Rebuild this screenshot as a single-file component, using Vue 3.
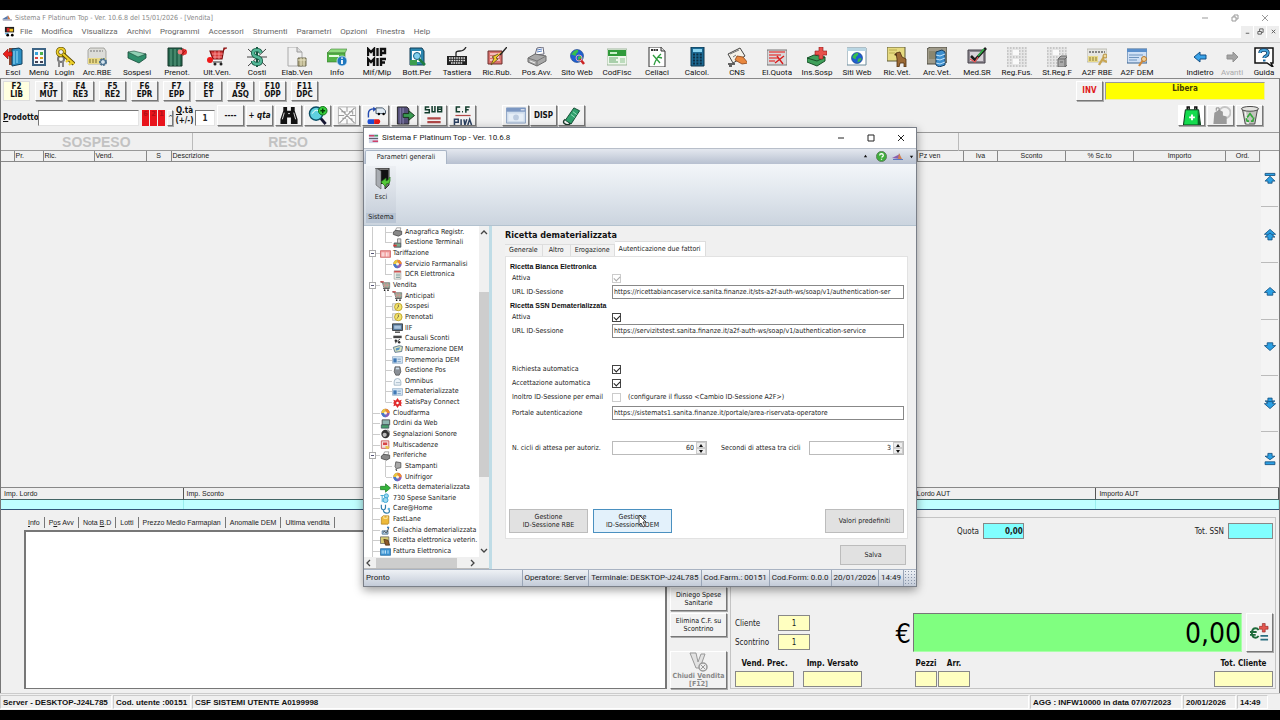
<script setup>
import { ref } from 'vue'

const menus = ['File', 'Modifica', 'Visualizza', 'Archivi', 'Programmi', 'Accessori', 'Strumenti', 'Parametri', 'Opzioni', 'Finestra', 'Help']

const globe = (x, y, r) =>
  `<circle cx="${x}" cy="${y}" r="${r}" fill="#1f5fd0" stroke="#123c80" stroke-width=".6"/><path d="M${x - r + 1} ${y - 1}q2-${r - 1} ${r} -${r - 1.5}q1 2-1 3t-1 3q-3 0-${r - 1}-3zM${x + 1} ${y + 1}q3-2 ${r - 2} 0q-1 3-4 ${r - 2}z" fill="#38c04a"/>`

const tools = [
  { t: 'Esci', s: 'w26', i: '<path d="M6 1h11v17H6z" fill="#8a4a34"/><path d="M9 2l7-1 3 2v14l-10 2z" fill="#2c8fc4" stroke="#12415f"/><path d="M11 4v13M14 4v12" stroke="#79c9ec" stroke-width="1.4"/><path d="M9 5H5V2L0 7l5 5V9h4z" fill="#e8201c" stroke="#8c0c0c" stroke-width=".6"/>' },
  { t: 'Menù', s: 'w26', i: '<path d="M3 1h14v18H3z" fill="#3d6485"/><path d="M5 3h10v14H5z" fill="#f4f8fb"/><path d="M6 5h3v3H6z" fill="#36a0da"/><path d="M11 5h3v3h-3z" fill="#4cb04c"/><path d="M6 10h3v2H6z" fill="#e04040"/><path d="M11 10h3v2h-3z" fill="#d8a020"/><path d="M6 14h3v2H6zM11 14h3v2h-3z" fill="#445"/>' },
  { t: 'Login', s: 'w25', i: '<circle cx="6" cy="12" r="3" fill="none" stroke="#777" stroke-width="2"/><path d="M4 14v6M8 14v6" stroke="#888" stroke-width="2"/><circle cx="6" cy="5" r="3.6" fill="none" stroke="#5c4a00" stroke-width="3.2"/><circle cx="6" cy="5" r="3.6" fill="none" stroke="#efd12b" stroke-width="2"/><path d="M8 7l11 10" stroke="#5c4a00" stroke-width="4"/><path d="M8 7l11 10M14 12l-3 3M17 15l-3 3" stroke="#efd12b" stroke-width="2.2"/>' },
  { t: 'Arc.RBE', i: '<path d="M1 3l2-2h14l2 3v13H1z" fill="#dcdcd8" stroke="#8a8a84" stroke-width=".7"/><path d="M3 4h13" stroke="#777" stroke-dasharray="2 1"/><path d="M1 11h18v6H1z" fill="#e8d98a"/><path d="M3 12v4M6 12v4M9 12v4" stroke="#9b8c45" stroke-width="1.4"/><circle cx="16" cy="15" r="3" fill="#d5e4ee" stroke="#49708f" stroke-width="2" stroke-dasharray="2 .7"/><circle cx="16" cy="15" r="2.5" fill="none" stroke="#49708f"/>' },
  { t: 'Sospesi', i: '<path d="M1 5l8 3 10-1v4l-7 5-11-5z" fill="#2f8f6c" stroke="#174a38" stroke-width=".8"/><path d="M1 5l6-1 12 3-8 3z" fill="#8fd0b4" stroke="#174a38" stroke-width=".6"/>' },
  { t: 'Prenot.', i: '<path d="M1 1h14v18H1z" fill="#27684f" stroke="#123528"/><path d="M4 2v17M8 2v17M12 2v17" stroke="#63a487"/><circle cx="17" cy="5" r="3" fill="#e83030"/><circle cx="13" cy="5" r="2.4" fill="#f47f7f"/><path d="M16 1v8M19 3l-5 5" stroke="#901010" stroke-width=".7"/>' },
  { t: 'Ult.Ven.', i: '<path d="M20 1h-3l-2 11H6L3 4h13" fill="#d83c3c" stroke="#7a1010" stroke-width="1.2"/><path d="M5 7h11M6 10h9M8 4v8M12 4v8" stroke="#ffaaaa" stroke-width=".7"/><circle cx="3" cy="13" r="3" fill="#f01818"/><path d="M6 15h9" stroke="#333"/><circle cx="8" cy="17" r="1.5" fill="#222"/><circle cx="14" cy="17" r="1.5" fill="#222"/>' },
  { t: 'Costi', i: '<path d="M1 2l18 17M19 2L1 19M0 10h20" stroke="#444"/><path d="M10 0v20" stroke="#14563f" stroke-width="2"/><path d="M14 6q-1-3-4-3-4 0-4 3t4 4q4 1 4 4t-4 3q-4 0-4-3" fill="none" stroke="#14563f" stroke-width="4"/><path d="M14 6q-1-3-4-3-4 0-4 3t4 4q4 1 4 4t-4 3q-4 0-4-3" fill="none" stroke="#53b797" stroke-width="2.4"/>' },
  { t: 'Elab.Ven', i: '<path d="M1 0h9l5 5v14H1z" fill="#f0f0f0" stroke="#aaa"/><path d="M10 0v5h5" fill="#ddd" stroke="#999"/><path d="M11 11h8v8h-8z" fill="#b5ad86" stroke="#6e6a50"/><path d="M11 13h8M14 11v8M17 11v8" stroke="#e9e4c4"/>' },
  { t: 'Info', i: '<path d="M0 6l4-4h16l-2 4z" fill="#8fdc7e" stroke="#44843a" stroke-width=".6"/><path d="M0 6h18v9H0z" fill="#55b447" stroke="#34752c" stroke-width=".6"/><path d="M2 9h10" stroke="#e6ffe0" stroke-width="2"/><circle cx="15" cy="14" r="5" fill="#1f77bd" stroke="#cfe6f7" stroke-width=".8"/><path d="M15 13v4M15 10.400v1.400" stroke="#fff" stroke-width="1.8"/>' },
  { t: 'Mif/Mip', i: '<path d="M1 9V2l3 3 3-3v7M10.500 1v8M14 9V2h4v4h-4M1 19v-7l3 3 3-3v7M10.500 11v8M14 19v-7h5M14 15.500h4" fill="none" stroke="#111" stroke-width="2.400"/>' },
  { t: 'Bott.Per', i: '<path d="M3 1h12l2 3v14H3z" fill="#2b87b0" stroke="#123d55"/><path d="M5 4h9v11H5z" fill="#fff"/><circle cx="10" cy="9" r="3.500" fill="#82d0ee" stroke="#176085"/><path d="M12 12l6 6" stroke="#1e7c40" stroke-width="2.500"/><path d="M3 13h7v5H3z" fill="#3b9d4e"/>' },
  { t: 'Tastiera', i: '<path d="M9 9V6q0-2 4-2t6-4" fill="none" stroke="#222" stroke-width="1.300"/><path d="M0 9h20v9H0z" fill="#222"/><path d="M2 11h16M2 13.500h16M4 16h12" stroke="#e4e4e4" stroke-width="1.300" stroke-dasharray="1.600 .8"/>' },
  { t: 'Ric.Rub.', i: '<path d="M1 4h14v13H1z" fill="#d9736f" stroke="#6d2f2d"/><path d="M3 7h10M3 10h9M3 13h10" stroke="#fbd6d4" stroke-width="1.400"/><path d="M20 0L13 8" stroke="#222" stroke-width="1.400"/><path d="M15 5L9 11l2 1-7 6 3-7-2-1 6-3" fill="#f2cd2a" stroke="#57471a" stroke-width=".8"/>' },
  { t: 'Pos.Avv.', i: '<path d="M8 8l2-7 6-1 1 7z" fill="#fff" stroke="#667"/><path d="M10 3l5-1M10 5l5-1" stroke="#5c84c4"/><path d="M1 11l7-4 11 2v5l-9 5-9-4z" fill="#a8a8a8" stroke="#6b6b6b"/><path d="M1 11l9 3 9-5M10 14v5" fill="none" stroke="#777"/><path d="M3 14l5 2" stroke="#eee"/>' },
  { t: 'Sito Web', i: globe(10, 9, 6.5) + '<path d="M13 12l4 5" stroke="#c22" stroke-width="2.500"/><circle cx="12" cy="11" r="3" fill="none" stroke="#d8a0c0"/>' },
  { t: 'CodFisc', i: '<path d="M0 2h20v16H0z" fill="#eef6ec" stroke="#7fa07b" stroke-width=".7"/><path d="M1 3h18v6H1z" fill="#2f9a3a"/><path d="M3 5h7v2H3z" fill="#c9efca"/><path d="M2 11h9M2 13h7M2 15h9" stroke="#64a96a"/><path d="M13 11h5v5h-5z" fill="#bcdcbc"/>' },
  { t: 'Celiaci', i: '<path d="M2 0h12l4 4v16H2z" fill="#fff" stroke="#333"/><path d="M14 0v4h4" fill="#ddd" stroke="#333"/><path d="M4 3h7" stroke="#333" stroke-width="2" stroke-dasharray="2 .6"/><path d="M6 8l7 8M14 7q-5 4-7 11M11 10l4 1" fill="none" stroke="#2c9b3c" stroke-width="1.300"/>' },
  { t: 'Calcol.', i: '<path d="M4 0h13v19H4z" fill="#1c6a94" stroke="#0c354d"/><path d="M6 2h9v3H6z" fill="#8bd3ef"/><path d="M6 7.500h9M6 10.500h9M6 13.500h9M6 16.500h9" stroke="#0d2d42" stroke-width="2" stroke-dasharray="2 1.400"/>' },
  { t: 'CNS', i: '<path d="M1 7L13 1l5 8L6 16z" fill="#f4f1e8" stroke="#444"/><path d="M3 7l9-4M6 10l3-2" stroke="#777"/><path d="M10 9l6 1 5 6-6 1-7-4z" fill="#e9883f" stroke="#8a4316" stroke-width=".8"/><path d="M1 17h7M2 19h3" stroke="#333" stroke-width="1.500"/>' },
  { t: 'El.Quota', i: '<path d="M0 3h20v15H0z" fill="#d8d8da" stroke="#777"/><path d="M2 5h16M2 8h12M2 11h9M2 14h6" stroke="#e2504f" stroke-width="1.300"/><path d="M10 9l6 8M17 9l-9 7" stroke="#d91c1c" stroke-width="1.400"/>' },
  { t: 'Ins.Sosp', i: '<path d="M0 11l7-3 11 2v4l-8 5-10-4z" fill="#3fa05a" stroke="#195029"/><path d="M0 11l10 3 8-4" fill="none" stroke="#195029"/><path d="M12 0h4v4h4v4h-4v4h-4V8H8V4h4z" fill="#e8504c" stroke="#8c1a18" stroke-width=".6"/>' },
  { t: 'Siti Web', i: '<path d="M0 1h19v17H0z" fill="#fff" stroke="#6c8c9c"/><path d="M0 1h19v3H0z" fill="#b9d6e3"/>' + globe(10, 11, 5.5) },
  { t: 'Ric.Vet.', i: '<path d="M0 0h18v14H0z" fill="#e6da80" stroke="#5e5a38"/><path d="M2 3h8M2 6h6" stroke="#b8ac50"/><path d="M9 6l4-1 2 5 4 2v8h-2v-4h-4l-1 4h-2v-8z" fill="#9c6a35" stroke="#4c2d10" stroke-width=".8"/><path d="M9 6l-2 2 3 1" fill="#4c2d10"/>' },
  { t: 'Arc.Vet.', i: '<path d="M0 2l3-2h17v15l-4 2H0z" fill="#a09b8a" stroke="#4b493f"/><path d="M2 4h8v8H2z" fill="#8a866f"/><path d="M9 5l6-2 3 2v13l-6 2-3-2z" fill="#3d8fce" stroke="#173f62"/><path d="M9 8l4 1 5-2M9 12l4 1 5-2M9 16l4 1 5-2" fill="none" stroke="#c5e5fb"/>' },
  { t: 'Med.SR', i: '<path d="M1 3h17v13H1z" fill="#8d8890" stroke="#454148"/><path d="M3 5h13v9H3z" fill="#d8d2d8"/><path d="M4 9l4 4L19 1" fill="none" stroke="#1c1c1c" stroke-width="2.600"/><path d="M11 9l6-7" stroke="#31b247" stroke-width="1.600"/><path d="M3 12l5 3 3-5" fill="none" stroke="#e55" stroke-width="1.200"/>' },
  { t: 'Reg.Fus.', i: '<path d="M0 0h20v20H0z" fill="#e6e6e6"/><path d="M0 1h20M0 4h20M0 7h20M0 10h20M0 13h20M0 16h20M0 19h20" stroke="#bdbdbd" stroke-width="1.500" stroke-dasharray="1.500 1.500"/><path d="M6 3h6v5H6zM6 12h6v5H6z" fill="#fafafa"/>' },
  { t: 'St.Reg.F', i: '<path d="M0 0h20v20H0z" fill="#e6e6e6"/><path d="M0 1h20M0 4h20M0 7h20M0 10h20M0 13h20M0 16h20M0 19h20" stroke="#bdbdbd" stroke-width="1.500" stroke-dasharray="1.500 1.500"/><path d="M6 3h6v5H6z" fill="#fafafa"/><path d="M11 12l3-3h7v8l-3 3h-7z" fill="#aaa" stroke="#666"/><path d="M11 12h7v8M18 12l3-3M13 15h3" fill="none" stroke="#666"/>' },
  { t: 'A2F RBE', i: '<path d="M0 2h20v13H0z" fill="#e6e6e2" stroke="#a9a99e" stroke-width=".7"/><path d="M2 5h16" stroke="#666" stroke-width="1.400" stroke-dasharray="2 1"/><path d="M1 9h10v6H1z" fill="#e8d98a"/><path d="M3 10v4M6 10v4M9 10v4" stroke="#9b8c45" stroke-width="1.200"/><path d="M18 8l-6 10M16 13l4 2" stroke="#c9a653" stroke-width="2.400"/><circle cx="18" cy="9" r="2" fill="#ecd9a2" stroke="#b58f3c"/>' },
  { t: 'A2F DEM', i: '<path d="M0 2h20v14H0z" fill="#cfe0f6" stroke="#39628f"/><path d="M0 2h20v3H0z" fill="#5b8fcb"/><path d="M2 8h14M2 10.500h10M2 13h8" stroke="#6f94be"/><path d="M18 10l-6 9" stroke="#d28a3b" stroke-width="2.200"/><circle cx="17" cy="12" r="2.500" fill="#f3cf94" stroke="#b5762c"/>' }
]
const navTools = [
  { t: 'Indietro', i: '<path d="M16 8h-6V5L4 10l6 5v-3h6z" fill="#3aa3e8" stroke="#124f85"/>' },
  { t: 'Avanti', off: true, i: '<path d="M5 8h6V5l5 5-5 5v-3H5z" fill="#a4a4a4" stroke="#909090"/>' },
  { t: 'Guida', i: '<path d="M1 1h18v15h-2l2 4-6-4H1z" fill="#fff" stroke="#111" stroke-width="1.500"/><path d="M6 6q0-3 4-3t4 3q0 2-2 3t-2 2" fill="none" stroke="#143d66" stroke-width="3.400"/><path d="M6 6q0-3 4-3t4 3q0 2-2 3t-2 2" fill="none" stroke="#47a6dc" stroke-width="1.800"/><path d="M9 12.500h2.500v2H9z" fill="#1c6aa0"/>' }
]

const keys = [['F2', 'LIB'], ['F3', 'MUT'], ['F4', 'RE3'], ['F5', 'RE2'], ['F6', 'EPR'], ['F7', 'EPP'], ['F8', 'ET'], ['F9', 'ASQ'], ['F10', 'OPP'], ['F11', 'DPC']]

const binoculars = '<path d="M4 1h4v4h4V1h4v4l3 9v5h-7v-7H8v7H1v-5l3-9z" fill="#111"/><path d="M5 7l-2 7M15 7l2 7M9 8h2" stroke="#ddd"/>'
const lens = '<path d="M12 12l6 7" stroke="#151530" stroke-width="3"/><circle cx="8" cy="8" r="7" fill="#5fd0e0" stroke="#0b4e66" stroke-width="1.500"/><path d="M4 8q3-5 6-3" stroke="#fff" fill="none"/><circle cx="15" cy="5" r="4.500" fill="#37d13c" stroke="#0c6c14"/><path d="M15 2.500v5M12.500 5h5" stroke="#043c08" stroke-width="1.500"/>'
const circuit = '<path d="M1 1h18v18H1z" fill="#fafafa" stroke="#b5b5b5"/><path d="M2 2l16 16M18 2L2 18M10 1v5M1 10h6M13 10h6M10 14v5M4 6h4v3M12 6h4v3M5 13h4M12 13l4 1" fill="none" stroke="#999" stroke-width="1.100"/>'
const delivery = '<path d="M2 12V8q0-5 6-5" fill="none" stroke="#234bb0" stroke-width="1.500"/><path d="M7 1l4 2-4 3z" fill="#234bb0"/><path d="M10 2h7l3 3v3H10z" fill="#dfeaf4" stroke="#456"/><circle cx="13" cy="8.500" r="1.300"/><circle cx="18" cy="8.500" r="1.300"/><path d="M2 14h6v5H2q-2-2 0-5z" fill="#1e50d8"/><path d="M8 14h5q3 2 0 5H8z" fill="#e51c1c"/>'
const doorOut = '<path d="M2 1h10l2 2v16H2z" fill="#544f78" stroke="#222"/><path d="M5 2v17M8 2v17" stroke="#8e89b5"/><path d="M8 8h6V5l6 5-6 5v-3H8z" fill="#3a9b52" stroke="#16301b"/>'
const sub = '<path d="M5 1H1v3h4v3H0M8 0v6h3V0M14 1v5h4V1zM14 3.500h4" fill="none" stroke="#123c2c" stroke-width="1.600"/><path d="M3 13h14M3 17h14" stroke="#b04848" stroke-width="2.400"/>'
const cf = '<path d="M7 1H3v5h4M9 6h1M17 1h-4v6M13 4h3" fill="none" stroke="#123c2c" stroke-width="1.600"/><path d="M2 10h16" stroke="#b04848" stroke-width="1.300"/><path d="M1 20v-6h4v3H1M8 14v6M11 14l1 6 2-6M15 20l2-6 2 6" fill="none" stroke="#2b4060" stroke-width="1.600"/>'
const windowPic = '<path d="M0 2h20v16H0z" fill="#cfdcec" stroke="#8fa5c4"/><path d="M0 2h20v4H0z" fill="#7c97c2"/><path d="M15 4h4" stroke="#fff"/><path d="M2 8h16v8H2z" fill="#e6eef7"/><circle cx="10" cy="12" r="3" fill="#bccbe0"/>'
const tube = '<path d="M12 2l6 3-9 14-6-4z" fill="#2fa06c" stroke="#0f4a30"/><path d="M11 6l4 3M9 9l4 3" stroke="#9be0bf"/><path d="M3 14q-4 3 0 5t5-1" fill="none" stroke="#1d3a2c" stroke-width="1.500"/>'
const bag = '<path d="M5 4V1h2v3M13 4V1h2v3" fill="none" stroke="#111" stroke-width="1.600"/><path d="M3 4h14l2 16H1z" fill="#14db4e" stroke="#0a3016"/><path d="M16 4l3 16h-3z" fill="#0b5d26"/><path d="M10 9v6M7 12h6" stroke="#fff" stroke-width="2"/>'
const greyBag = '<circle cx="14" cy="7" r="6" fill="none" stroke="#c4c4c4" stroke-width="2"/><path d="M3 7l5-3 4 2v4l4 1v8H2z" fill="#9a9a9a"/><path d="M5 5V2h3v3" fill="none" stroke="#888"/>'
const bin = '<path d="M2 3l3 16h10l3-16z" fill="#c3c3c0" stroke="#444"/><path d="M5 6l2 12h2" fill="none" stroke="#f3f3f3" stroke-width="1.500"/><ellipse cx="10" cy="3" rx="9" ry="2.500" fill="#e3e3e0" stroke="#444"/><path d="M7 12l3-4 3 4M14 12l-1 4h-2M9 16H7l-1-3" fill="none" stroke="#34a83a" stroke-width="1.800"/>'
const euroSum = '<path d="M9 7q-1-2-3-2-4 0-4 5t4 5q2 0 3-2M0 9h7M0 12h6" fill="none" stroke="#1f6a3b" stroke-width="2"/><path d="M13 0h3v3h3v3h-3v3h-3V6h-3V3h3z" fill="#e2574f" stroke="#8c1a18" stroke-width=".6"/><path d="M11 13h8M11 17h8" stroke="#2b6f80" stroke-width="2"/>'
const closeSale = '<path d="M1 1h6l2 9 3-8h4l-5 14H7z" fill="#e2e2e2" stroke="#999"/><circle cx="14" cy="15" r="4" fill="#eee" stroke="#999" stroke-width="1.500"/><path d="M12 13l4 4M16 13l-4 4" stroke="#999"/>'

const actions = [
  { label: 'Cerca', i: binoculars }, { label: 'Zoom', i: lens }, { label: 'Schema', i: circuit }, { label: 'Consegna', i: delivery },
  { label: 'Uscita', i: doorOut }, { label: 'Subtotale', i: sub }, { label: 'C.F. / P.IVA', i: cf }
]

const scrolls = [
  { label: 'Inizio', d: ['M3 2h14v3H3z', 'M10 6l7 7h-4v3H7v-3H3z'] },
  { label: 'Pagina su', d: ['M10 2l8 7h-4v3H6V9H2z', 'M10 7l7 6h-4v4H7v-4H3z'] },
  { label: 'Su', d: ['M10 5l8 7h-4v4H6v-4H2z'] },
  { label: 'Giù', d: ['M10 15L2 8h4V4h8v4h4z'] },
  { label: 'Pagina giù', d: ['M10 13L3 7h4V3h6v4h4z', 'M10 18l-8-7h4V8h8v3h4z'] },
  { label: 'Fine', d: ['M10 11L3 6h4V2h6v4h4z', 'M3 14h14v4H3z'] }
]

const ball = '<circle cx="6" cy="6" r="5" fill="#8d5fb5"/><path d="M6 6V1a5 5 0 0 1 5 5z" fill="#ef8a2d"/><path d="M6 6H1a5 5 0 0 1 5-5z" fill="#e9c83a"/><path d="M6 6v5a5 5 0 0 1-5-5z" fill="#4879c9"/><circle cx="6" cy="6" r="1.800" fill="#fff4d8"/>'
const printer = '<path d="M3 5l2-4h5l-1 4z" fill="#fff" stroke="#666" stroke-width=".7"/><path d="M1 6l3-2 7 1v4l-4 2-6-2z" fill="#888" stroke="#333" stroke-width=".8"/>'
const cart = '<path d="M0 1h2l2 7h7V2H3z" fill="#8fb69b" stroke="#666" stroke-width=".8"/><path d="M5 2v6M8 2v6M3 5h8" stroke="#d89090"/><path d="M0 1h4" stroke="#c44" stroke-width="1.500"/><path d="M3 9h8" stroke="#444"/><circle cx="5" cy="11" r="1" fill="#222"/><circle cx="9" cy="11" r="1" fill="#222"/>'
const clock = '<path d="M0 2h5v8H0z" fill="#e8e8e8" stroke="#999" stroke-width=".6"/><circle cx="7" cy="6" r="4.500" fill="#f3e46a" stroke="#b79b23"/><path d="M7 3v3l-2 2" fill="none" stroke="#654"/>'
const slip = '<path d="M0 2h12v8H0z" fill="#d6e6f5" stroke="#7b9ab8" stroke-width=".7"/><path d="M1 4h4v5H1z" fill="#3f78b5"/><path d="M6 5h4M6 8h4" stroke="#6b91b6"/>'
const tree = [
  { t: 'Anagrafica Registr.', l: 1, i: printer },
  { t: 'Gestione Terminali', l: 1, end: true, i: '<path d="M2 6h8v5H2z" fill="#7ba88a" stroke="#445"/><path d="M6 1h4v5H6z" fill="#ddd" stroke="#777"/><path d="M1 8h4v2H1z" fill="#d33"/>' },
  { t: 'Tariffazione', l: 0, open: true, i: '<path d="M0 2h12v8H0z" fill="#f29a9a" stroke="#c35050" stroke-width=".8"/><path d="M2 4v5M4 4v5M7 4v5M9 4v5" stroke="#fff"/>' },
  { t: 'Servizio Farmanalisi', l: 1, i: ball },
  { t: 'DCR Elettronica', l: 1, end: true, i: '<path d="M2 1h8v10H2z" fill="#f3f3ec" stroke="#888" stroke-width=".7"/><path d="M2 2h8" stroke="#c55" stroke-width="2"/><path d="M4 5h5M4 7h5M4 9h5" stroke="#799"/>' },
  { t: 'Vendita', l: 0, open: true, i: cart },
  { t: 'Anticipati', l: 1, i: cart },
  { t: 'Sospesi', l: 1, i: clock },
  { t: 'Prenotati', l: 1, i: clock },
  { t: 'IIF', l: 1, i: '<path d="M0 1h12v8H0z" fill="#56789c" stroke="#333"/><path d="M2 3h8v4H2z" fill="#a9c3dd"/><path d="M3 11h6" stroke="#333" stroke-width="1.500"/>' },
  { t: 'Causali Sconti', l: 1, i: '<path d="M1 2h10v3H1z" fill="#444"/><circle cx="4" cy="8" r="1.500" fill="#333"/><circle cx="8" cy="10" r="1.500" fill="#333"/><path d="M9 6l-6 5" stroke="#333"/>' },
  { t: 'Numerazione DEM', l: 1, i: '<path d="M1 4l7-2 4 1-1 6-8 1z" fill="#dfe6c0" stroke="#4c6a86"/><path d="M4 5l5-1-1 3-4 1z" fill="#5a96c4"/>' },
  { t: 'Promemoria DEM', l: 1, i: slip },
  { t: 'Gestione Pos', l: 1, i: '<path d="M3 1h6l1 6-2 4H4L2 7z" fill="#8a8f96" stroke="#444" stroke-width=".8"/><path d="M4 2h4v2H4z" fill="#cfe0ee"/>' },
  { t: 'Omnibus', l: 1, i: '<path d="M2 7a4 4 0 0 1 8 0v4H2z" fill="#eef4f8" stroke="#9ab0c0"/><path d="M4 8h5" stroke="#9ab0c0"/>' },
  { t: 'Dematerializzate', l: 1, i: slip },
  { t: 'SatisPay Connect', l: 1, end: true, i: '<path d="M6 0l2 3 3-1-1 3 2 1-2 1 1 3-3-1-2 3-2-3-3 1 1-3-2-1 2-1-1-3 3 1z" fill="#e02b2b"/><circle cx="6" cy="6" r="1.500" fill="#fff"/>' },
  { t: 'Cloudfarma', l: 0, i: ball },
  { t: 'Ordini da Web', l: 0, i: '<path d="M2 1h9v6H2z" fill="#8fb6b0" stroke="#444"/><path d="M1 7h9v4H1z" fill="#48a06c" stroke="#345" stroke-width=".8"/>' },
  { t: 'Segnalazioni Sonore', l: 0, i: '<circle cx="6" cy="6" r="5" fill="#333"/><circle cx="5" cy="7" r="2.500" fill="#bbb"/><path d="M8 1l3 3" stroke="#999" stroke-width="2"/>' },
  { t: 'Multiscadenze', l: 0, i: '<path d="M1 1h9v9H1z" fill="#f5dede" stroke="#c24a4a"/><path d="M3 3h5v3H3z" fill="#d84545"/><path d="M6 7l5 1-2 3-3-1z" fill="#e9c54b"/>' },
  { t: 'Periferiche', l: 0, open: true, i: printer },
  { t: 'Stampanti', l: 1, i: '<path d="M4 1l6 1v6l-5 1-2-2z" fill="#aaa" stroke="#555"/><path d="M4 9l1 3" stroke="#555" stroke-width="1.500"/>' },
  { t: 'Unifrigor', l: 1, end: true, i: ball },
  { t: 'Ricetta dematerializzata', l: 0, i: '<path d="M0 4h6V1l6 5-6 5V8H0z" fill="#35b53b" stroke="#1a741f" stroke-width=".8"/>' },
  { t: '730 Spese Sanitarie', l: 0, i: '<circle cx="7" cy="3.500" r="2.500" fill="#9bd9f2" stroke="#2b9ccc"/><circle cx="6" cy="8.500" r="3" fill="#9bd9f2" stroke="#2b9ccc"/><path d="M0 3h4M2 3v8" stroke="#2b9ccc"/>' },
  { t: 'Care@Home', l: 0, i: '<path d="M1 1v3q0 3 2.500 3T6 4V1M3.500 7q0 4 4 4t3-4" fill="none" stroke="#2f7dab" stroke-width="1.400"/><circle cx="10" cy="6" r="1.500" fill="#5db1dc"/>' },
  { t: 'FastLane', l: 0, i: '<path d="M1 3l2-2h7v9l-1 1H1z" fill="#edb93a" stroke="#a8781a" stroke-width=".8"/><path d="M4 1v3h4V1" fill="none" stroke="#fff0b8"/>' },
  { t: 'Celiachia dematerializzata', l: 0, i: '<path d="M2 7h7v4H2z" fill="#b7d3e8" stroke="#4a6f90"/><path d="M3 9q2-3 3 0t4-6" fill="none" stroke="#333"/><circle cx="9" cy="3" r="1.300" fill="#357ac0"/>' },
  { t: 'Ricetta elettronica veterin.', l: 0, i: '<path d="M0 1h10v8H0z" fill="#d8cc74" stroke="#555" stroke-width=".8"/><path d="M4 4l5 1 2 6H6z" fill="#8b5a2b" stroke="#41260c" stroke-width=".8"/>' },
  { t: 'Fattura Elettronica', l: 0, i: '<path d="M0 2h12v8H0z" fill="#3c94d3" stroke="#1d6097" stroke-width=".8"/><path d="M2 4v4M4 4v4M6 4v4M9 4v4" stroke="#d5efff"/>' }
]

const totals = ['Imp. Lordo', 'Imp. Sconto', '', '', '', 'Lordo AUT', 'Importo AUT']
const urlRbe = ref('https://ricettabiancaservice.sanita.finanze.it/sts-a2f-auth-ws/soap/v1/authentication-ser')
const urlDem = ref('https://servizitstest.sanita.finanze.it/a2f-auth-ws/soap/v1/authentication-service')
const portal = ref('https://sistemats1.sanita.finanze.it/portale/area-riservata-operatore')
const cycles = ref(60)
const seconds = ref(3)
</script>

<template>
  <div class="screen">
    <header class="titlebar">
      <svg class="logo" viewBox="0 0 12 8"><path d="M0 6l7-4v4z" fill="#5577aa" /><path d="M7 1l3 5H7z" fill="#cf7a4a" /><path d="M1 7h11" stroke="#668" /></svg>
      <span class="grow">Sistema F Platinum Top - Ver. 10.6.8 del 15/01/2026 - [Vendita]</span>
      <button class="win" aria-label="Riduci"><svg viewBox="0 0 8 8"><path d="M1 4h6" /></svg></button>
      <button class="win" aria-label="Ripristina"><svg viewBox="0 0 8 8"><path d="M1 3h4v4H1zM3 3V1h4v4H5" /></svg></button>
      <button class="win" aria-label="Chiudi"><svg viewBox="0 0 8 8"><path d="M1 1l6 6M7 1L1 7" /></svg></button>
    </header>

    <nav class="menubar">
      <svg class="doc" viewBox="0 0 12 12"><path d="M1 1h10v6H1z" fill="#222" /><path d="M3 2h3v4H3z" fill="#d22" /><path d="M6 3h4v3H6z" fill="#f0c020" /><path d="M1 8h4v1H1z" fill="#28c" /><circle cx="4" cy="10" r="1.500" /><circle cx="9" cy="10" r="1.500" /></svg>
      <button v-for="m in menus" :key="m">{{ m }}</button>
      <span class="grow"></span>
      <button class="mdi" aria-label="Riduci finestra"><svg viewBox="0 0 8 8"><path d="M2 6h4" /></svg></button>
      <button class="mdi" aria-label="Ripristina finestra"><svg viewBox="0 0 8 8"><path d="M1 4h4v3H1zM3 4V1h4v4H5" /></svg></button>
      <button class="mdi" aria-label="Chiudi finestra"><svg viewBox="0 0 8 8"><path d="M2 2l4 4M6 2L2 6" /></svg></button>
    </nav>

    <div class="toolbar">
      <button v-for="t in tools" :key="t.t" class="tool" :class="t.s"><svg viewBox="0 0 20 20" v-html="t.i"></svg>{{ t.t }}</button>
      <span class="grow"></span>
      <button v-for="t in navTools" :key="t.t" class="tool nav" :class="{ off: t.off }"><svg viewBox="0 0 20 20" v-html="t.i"></svg>{{ t.t }}</button>
    </div>

    <main class="work">
      <div class="keys">
        <button v-for="(k, n) in keys" :key="k[0]" class="raised key" :class="{ active: n === 0 }">{{ k[0] }}<br />{{ k[1] }}</button>
        <span class="grow"></span>
        <button class="raised key inv">INV</button>
        <div class="state">Libera</div>
      </div>

      <div class="product">
        <label for="prod" class="plabel"><u>P</u>rodotto</label>
        <input id="prod" class="sunk pinput" />
        <span class="flags"><b>6</b><b>2</b><b>1</b></span>
        <button class="raised tiny" aria-label="Altro">^</button>
        <label for="qty" class="qlabel"><u>Q</u>.tà<br />(+/-)</label>
        <input id="qty" class="sunk qty" value="1" />
        <div class="acts">
          <button class="raised act">----</button>
          <button class="raised act"><i>+ qta</i></button>
          <button v-for="a in actions" :key="a.label" class="raised act" :aria-label="a.label"><svg viewBox="0 0 20 20" v-html="a.i"></svg></button>
        </div>
        <div class="acts second">
          <button class="raised act" aria-label="Finestra"><svg viewBox="0 0 20 20" v-html="windowPic"></svg></button>
          <button class="raised act">DISP</button>
          <button class="raised act" aria-label="Flacone"><svg viewBox="0 0 20 20" v-html="tube"></svg></button>
        </div>
        <span class="grow"></span>
        <div class="acts">
          <button class="raised act lit" aria-label="Busta"><svg viewBox="0 0 20 20" v-html="bag"></svg></button>
          <button class="raised act" aria-label="Busta vuota"><svg viewBox="0 0 20 20" v-html="greyBag"></svg></button>
          <button class="raised act" aria-label="Cestino"><svg viewBox="0 0 20 20" v-html="bin"></svg></button>
        </div>
      </div>

      <div class="band"><span>SOSPESO</span><span>RESO</span><span></span><span></span><span></span><span></span></div>

      <div class="gridarea">
        <div class="sheet">
          <table>
            <colgroup><col class="c12" /><col class="c29" /><col class="c51" /><col class="c52" /><col class="c25" /><col /><col class="c46" /><col class="c34" /><col class="c68" /><col class="c68" /><col class="c92" /><col class="c34" /></colgroup>
            <thead>
              <tr><th></th><th>Pr.</th><th>Ric.</th><th>Vend.</th><th class="mid">S</th><th>Descrizione</th><th>Pz ven</th><th class="mid">Iva</th><th class="mid">Sconto</th><th class="mid">% Sc.to</th><th class="mid">Importo</th><th class="mid">Ord.</th></tr>
            </thead>
          </table>
        </div>
        <div class="scrolls">
          <button v-for="s in scrolls" :key="s.label" :aria-label="s.label">
            <svg viewBox="0 0 20 20"><path v-for="d in s.d" :key="d" :d="d" fill="#2ba0e4" stroke="#14507e" stroke-width="1.200" /></svg>
          </button>
        </div>
      </div>

      <div class="totals">
        <div v-for="(t, n) in totals" :key="n"><span>{{ t }}</span><output></output></div>
      </div>

      <div class="bottom">
        <section class="infopane">
          <div class="infotabs">
            <button><u>I</u>nfo</button><button>P<u>o</u>s Avv</button><button>Nota <u>B</u>.D</button><button>Lotti</button><button>Prezzo Medio Farmaplan</button><button>Anomalie DEM</button><button>Ultima vendita</button>
          </div>
          <div class="infobody"></div>
        </section>
        <div class="sidebtns">
          <button class="raised">Diniego Spese<br />Sanitarie</button>
          <button class="raised">Elimina C.F. su<br />Scontrino</button>
          <button class="raised close"><svg viewBox="0 0 20 20" v-html="closeSale"></svg><span>Chiudi <u>V</u>endita<br />[F12]</span></button>
        </div>
        <section class="sums">
          <div class="sumrow top">
            <label for="quota">Quota</label><input id="quota" class="fld cyan w40" value="0,00" />
            <label for="ssn" class="push">Tot. SSN</label><input id="ssn" class="fld cyan w44" />
          </div>
          <div class="sumrow sale">
            <div class="counts">
              <label for="cli">Cliente</label><input id="cli" class="fld" value="1" />
              <label for="sco">Scontrino</label><input id="sco" class="fld" value="1" />
            </div>
            <span class="euro">€</span>
            <output class="amount">0,00</output>
            <button class="raised pay" aria-label="Somma"><svg viewBox="0 0 20 20" v-html="euroSum"></svg></button>
          </div>
          <div class="sumrow foot">
            <label class="stack w58">Vend. Prec.<input class="fld" /></label>
            <label class="stack w58">Imp. Versato<input class="fld" /></label>
            <label class="stack w22 pz">Pezzi<input class="fld" /></label>
            <label class="stack w32">Arr.<input class="fld" /></label>
            <label class="stack w58 push">Tot. Cliente<input class="fld" /></label>
          </div>
        </section>
      </div>
    </main>

    <footer class="status">
      <span class="s112">Server - DESKTOP-J24L785</span><span class="s78">Cod. utente :00151</span><span class="grow">CSF SISTEMI UTENTE A0199998</span>
      <span class="s152">AGG : INFW10000 in data 07/07/2023</span><span class="s53">20/01/2026</span><span class="s30">14:49</span>
    </footer>

    <div class="dialog" role="dialog" aria-labelledby="dlg-title">
      <header class="dtitle">
        <svg viewBox="0 0 12 12"><path d="M1 1h10v10H1z" fill="#cfd4e6" /><path d="M1 3h6M5 9h6" stroke="#d0406a" stroke-width="1.500" /><path d="M1 6h10" stroke="#556" /><path d="M7 3h4" stroke="#3a9a5a" stroke-width="1.500" /></svg>
        <span id="dlg-title" class="grow">Sistema F Platinum Top - Ver. 10.6.8</span>
        <button aria-label="Riduci"><svg viewBox="0 0 8 8"><path d="M1 4h6" /></svg></button>
        <button aria-label="Ingrandisci"><svg viewBox="0 0 8 8"><path d="M1 1h6v6H1z" /></svg></button>
        <button aria-label="Chiudi"><svg viewBox="0 0 8 8"><path d="M1 1l6 6M7 1L1 7" /></svg></button>
      </header>
      <div class="rtabs">
        <button class="rtab">Parametri generali</button>
        <span class="grow"></span>
        <svg class="arr" viewBox="0 0 6 6"><path d="M1 4l2-3 2 3z" fill="#111" /></svg>
        <svg class="help" viewBox="0 0 12 12"><circle cx="6" cy="6" r="5.500" fill="#3fae3c" stroke="#5a7d5a" /><path d="M4 5q0-2 2-2t2 2q0 1-2 2M6 8.500v1" fill="none" stroke="#fff" stroke-width="1.400" /></svg>
        <svg class="shark" viewBox="0 0 12 8"><path d="M0 5l8-4v5z" fill="#8a5fb0" /><path d="M7 0l3 6H6z" fill="#d08050" /><path d="M1 6.500h10" stroke="#5a78c0" /></svg>
        <svg class="arr" viewBox="0 0 6 6"><path d="M1 2h4L3 5z" fill="#111" /></svg>
      </div>
      <div class="ribbon">
        <div class="group">
          <button><svg viewBox="0 0 16 22"><path d="M1 0h13v17l-4 4V4L1 1z" fill="#777" stroke="#333" /><path d="M4 2h9v14H4z" fill="#111" /><path d="M1 0l5 3v18l-5-4z" fill="#a9adb2" stroke="#555" stroke-width=".6" /><path d="M15 9v4q0 3-4 3v3l-5-5 5-4v3q2 0 4-4z" fill="#55c938" stroke="#24771a" stroke-width=".7" /></svg>Esci</button>
          <span>Sistema</span>
        </div>
      </div>
      <div class="dbody">
        <aside class="treepane">
          <div class="treewrap">
            <ul class="tree">
              <li v-for="r in tree" :key="r.t" :class="{ child: r.l, end: r.end }">
                <span class="rail"></span><span v-if="r.l" class="rail sub"></span><span class="branch"></span>
                <span v-if="r.open" class="minus"></span>
                <svg viewBox="0 0 12 12" v-html="r.i"></svg><span>{{ r.t }}</span>
              </li>
            </ul>
            <div class="vbar"><svg viewBox="0 0 8 8"><path d="M1 6l3-3 3 3" /></svg><i class="space"></i><i class="thumb"></i><i class="space2"></i><svg viewBox="0 0 8 8"><path d="M1 2l3 3 3-3" /></svg></div>
          </div>
          <div class="hbar"><svg viewBox="0 0 8 8"><path d="M5 1L2 4l3 3" /></svg><i></i><svg viewBox="0 0 8 8"><path d="M3 1l3 3-3 3" /></svg></div>
        </aside>
        <section class="content">
          <h2>Ricetta dematerializzata</h2>
          <div class="tabs"><button>Generale</button><button>Altro</button><button>Erogazione</button><button class="sel">Autenticazione due fattori</button></div>
          <form class="page" @submit.prevent>
            <h3>Ricetta Bianca Elettronica</h3>
            <div class="row r12"><label for="a1">Attiva</label><input id="a1" type="checkbox" checked disabled /></div>
            <div class="row r16"><label for="u1">URL ID-Sessione</label><input id="u1" v-model="urlRbe" class="txt" /></div>
            <h3>Ricetta SSN Dematerializzata</h3>
            <div class="row r12"><label for="a2">Attiva</label><input id="a2" type="checkbox" checked /></div>
            <div class="row r16"><label for="u2">URL ID-Sessione</label><input id="u2" v-model="urlDem" class="txt" /></div>
            <div class="row r14 far"><label for="c1">Richiesta automatica</label><input id="c1" type="checkbox" checked /></div>
            <div class="row r14"><label for="c2">Accettazione automatica</label><input id="c2" type="checkbox" checked /></div>
            <div class="row r14"><label for="c3">Inoltro ID-Sessione per email</label><input id="c3" type="checkbox" disabled /><span class="note">(configurare il flusso &lt;Cambio ID-Sessione A2F&gt;)</span></div>
            <div class="row r18"><label for="po">Portale autenticazione</label><input id="po" v-model="portal" class="txt" /></div>
            <div class="row r14 spins">
              <label for="n1">N. cicli di attesa per autoriz.</label>
              <span class="spin"><input id="n1" v-model="cycles" /><span><button type="button" aria-label="Più" @click="cycles++"><i class="u"></i></button><button type="button" aria-label="Meno" @click="cycles--"><i class="d"></i></button></span></span>
              <label for="n2" class="l2">Secondi di attesa tra cicli</label>
              <span class="spin"><input id="n2" v-model="seconds" /><span><button type="button" aria-label="Più" @click="seconds++"><i class="u"></i></button><button type="button" aria-label="Meno" @click="seconds--"><i class="d"></i></button></span></span>
            </div>
            <div class="btns">
              <button type="button">Gestione<br />ID-Sessione RBE</button>
              <button type="button" class="hot">Gestione<br />ID-Sessione DEM<svg class="cursor" viewBox="0 0 9 14"><path d="M1 1v10l2-2 2 4 2-1-2-4h3z" fill="#fff" stroke="#222" stroke-width=".8" /></svg></button>
              <span class="grow"></span>
              <button type="button">Valori predefiniti</button>
            </div>
          </form>
          <button class="save">Salva</button>
        </section>
      </div>
      <footer class="dstatus"><span class="grow">Pronto</span><span>Operatore: Server</span><span>Terminale: DESKTOP-J24L785</span><span>Cod.Farm.: 00151</span><span>Cod.Form: 0.0.0</span><span>20/01/2026</span><span>14:49</span><i class="grip"></i></footer>
    </div>
  </div>
</template>

<style>
body { background: #000; }
</style>

<style scoped>
* { box-sizing: border-box; }
.screen { position: relative; display: flex; flex-direction: column; height: 100vh; padding: 10px 0; background: #000; font: 7px/9px "DejaVu Sans Condensed", "DejaVu Sans", sans-serif; color: #222; overflow: hidden; }
button, input { font: inherit; color: inherit; margin: 0; padding: 0; border: 0; border-radius: 0; background: none; min-width: 0; }
svg { display: block; flex: none; }
.grow { flex: 1; }
h2, h3, ul { margin: 0; padding: 0; }

.titlebar { display: flex; align-items: center; height: 15px; background: #fff; color: #888; font: 8px/10px "DejaVu Sans Condensed", "DejaVu Sans", sans-serif; font-size: 7px; flex: none; }
.logo { width: 10px; height: 7px; margin: 0 3px 0 2px; }
.win { width: 30px; display: grid; place-items: center; }
.win svg, .mdi svg { width: 8px; height: 8px; fill: none; stroke: #999; stroke-width: 1; }
.menubar { display: flex; align-items: center; height: 13px; background: #fff; color: #666; font: 8px/12px Roboto, "Open Sans", sans-serif; flex: none; }
.menubar .doc { width: 11px; height: 11px; margin: 0 5px 0 4px; }
.menubar button { margin-right: 9px; }
.menubar .mdi { width: 12px; height: 12px; margin-right: 1px; background: #eee; display: grid; place-items: center; }
.menubar .mdi svg { stroke: #555; width: 7px; height: 7px; }

.toolbar { display: flex; height: 41px; padding-top: 9px; border-bottom: 1px solid #888; background: linear-gradient(#eee 4px, #ccc 4px, #ccc 5px, #f0f0f0 5px); flex: none; }
.tool { flex: none; width: 40px; display: flex; flex-direction: column; align-items: center; font: 8px/12px Roboto, "Open Sans", sans-serif; color: #111; white-space: nowrap; }
.tool svg { width: 20px; height: 20px; }
.tool.w26 { width: 26px; }
.tool.w25 { width: 25px; }
.tool.nav { width: 32px; }
.tool.off { color: #aaa; }

.work { flex: 1; display: flex; flex-direction: column; min-height: 0; background: #f0f0f0; border: solid #777; border-width: 0 1px 0 1px; }
.raised { background: #f2f2f2; border: 1px solid #fff; border-right-color: #777; border-bottom-color: #777; box-shadow: 1px 1px 0 #aaa; color: #111; }
.sunk { background: #fff; border: 1px solid #777; border-right-color: #e4e4e4; border-bottom-color: #e4e4e4; }
.keys { display: flex; gap: 5px; height: 26px; padding: 2px 14px 0 2px; flex: none; }
.key { width: 27px; height: 20px; font-size: 8px; font-weight: bold; line-height: 8px; }
.key.active { background: #ffffe0; border-color: #ddd; box-shadow: none; }
.key.inv { color: #e01818; margin-right: -3px; }
.state { width: 160px; height: 18px; margin-top: 1px; background: #ff0; border: 1px solid #999; border-color: #999 #eea #eea #999; text-align: center; font-size: 8px; font-weight: bold; line-height: 11px; color: #443a00; }

.product { display: flex; align-items: flex-end; height: 28px; padding: 0 16px 6px 2px; border-bottom: 1px solid #999; flex: none; }
.plabel { width: 35px; font-size: 8px; font-weight: bold; color: #111; line-height: 16px; white-space: nowrap; }
.pinput { width: 101px; height: 16px; }
.flags { display: flex; gap: 1px; margin: 0 2px 0 3px; }
.flags b { width: 7px; height: 16px; background: #e8141c; color: #b01018; text-align: center; }
.tiny { width: 6px; height: 16px; overflow: hidden; }
.qlabel { width: 22px; padding-left: 1px; font-size: 8px; font-weight: bold; text-align: center; line-height: 10px; color: #111; }
.qty { width: 20px; height: 16px; text-align: center; font-size: 8px; font-weight: bold; margin-right: 2px; }
.acts { display: flex; gap: 2px; }
.acts.second { margin-left: 26px; gap: 1px; }
.act { width: 27px; height: 21px; display: grid; place-items: center; font-size: 8px; font-weight: bold; }
.act svg { width: 20px; height: 19px; }
.act.lit { background: #fff; }

.band { display: grid; grid-template-columns: repeat(5, 15%) 1fr; height: 18px; flex: none; border-bottom: 1px solid #999; }
.band span { border-right: 1px solid #bbb; text-align: center; font: bold 14px/18px "Liberation Sans", Arial, sans-serif; color: #c2c2c2; }
.band span:last-child { border: 0; }
.gridarea { flex: 1; display: flex; min-height: 0; padding-right: 1px; border-bottom: 1px solid #888; }
.sheet { flex: 1; margin-right: 1px; }
table { width: 100%; table-layout: fixed; border-collapse: collapse; }
th { height: 10px; padding: 0 1px; border-right: 1px solid #888; border-bottom: 1px solid #888; text-align: left; font: 7px/9px "Liberation Sans", Arial, sans-serif; color: #222; }
.mid { text-align: center; }
.c12 { width: 13px; } .c29 { width: 29px; } .c51 { width: 51px; } .c52 { width: 52px; } .c25 { width: 25px; } .c46 { width: 46px; } .c34 { width: 34px; } .c68 { width: 68px; } .c92 { width: 92px; }
.scrolls { width: 17px; display: flex; flex-direction: column; background: #f4f4f4; }
.scrolls button { flex: 1; display: grid; place-items: center; border-bottom: 1px solid #bbb; }
.scrolls button:last-child { border: 0; }
.scrolls svg { width: 14px; height: 14px; }

.totals { display: grid; grid-template-columns: repeat(7, 1fr); height: 22px; flex: none; font: 7px/10px "Liberation Sans", Arial, sans-serif; }
.totals div { display: flex; flex-direction: column; border-bottom: 1px solid #357; }
.totals span { height: 12px; padding: 1px 3px; border-bottom: 1px solid #466; border-right: 1px solid #555; }
.totals output { flex: 1; background: #c0ffff; border-right: 1px solid #9ee; }

.bottom { flex: none; display: flex; height: 183px; padding: 0 3px 4px 23px; }
.infopane { flex: 1; display: flex; flex-direction: column; padding-top: 7px; }
.infotabs { display: flex; height: 13px; font: 7px/12px "Liberation Sans", Arial, sans-serif; }
.infotabs button { padding: 0 4px; border-right: 1px solid #777; height: 11px; }
.infobody { flex: 1; background: #fff; border: solid #777; border-width: 2px 2px 1px 2px; }
.sidebtns { width: 57px; margin: 0 3px 0 3px; display: flex; flex-direction: column; justify-content: flex-end; gap: 2px; }
.sidebtns button { height: 24px; line-height: 8px; }
.sidebtns .close { height: 38px; margin-top: 12px; display: flex; flex-direction: column; align-items: center; color: #888; font-weight: bold; }
.close svg { width: 20px; height: 20px; }
.sums { width: 546px; margin-top: 7px; border: 1px solid #c4c4c4; padding: 5px 2px 1px 4px; display: flex; flex-direction: column; }
.sumrow { display: flex; }
.top { align-items: center; gap: 4px; padding-left: 222px; font-size: 8px; }
.push { margin-left: auto; }
.fld { background: #ffffc0; border: 1px solid #888; height: 16px; text-align: center; color: #222; }
.fld.cyan { background: #80ffff; font-weight: bold; text-align: right; }
.w40 { width: 41px; } .w44 { width: 45px; }
.sale { margin-top: auto; align-items: stretch; height: 39px; }
.counts { display: grid; grid-template-columns: 42px 32px; gap: 3px 1px; align-content: center; align-items: center; font-size: 8px; }
.euro { margin-left: auto; font: 27px/42px "DejaVu Sans Condensed", "DejaVu Sans", sans-serif; color: #000; margin-right: 2px; }
.amount { width: 329px; background: #80ff80; border: 1px solid #777; border-right-color: #afa; border-bottom-color: #afa; text-align: right; font: 28px/40px "DejaVu Sans Condensed", "DejaVu Sans", sans-serif; color: #000; }
.pay { width: 27px; margin-left: 4px; display: grid; place-items: center; }
.pay svg { width: 19px; height: 20px; }
.foot { margin-top: 5px; }
.stack { display: flex; flex-direction: column; align-items: center; font-weight: bold; font-size: 8px; line-height: 14px; white-space: nowrap; color: #111; }
.stack .fld { width: 100%; }
.w58 { width: 59px; margin-right: 9px; } .w58.push { margin-right: 0; }
.w22 { width: 22px; margin-right: 1px; } .w32 { width: 32px; }
.pz { margin-left: 44px; }

.status { flex: none; height: 17px; display: flex; gap: 1px; padding: 1px 12px 1px 0; background: #f0f0f0; border-top: 1px solid #ccc; font: bold 8px/14px "Liberation Sans", Arial, sans-serif; color: #111; }
.status span { padding: 0 2px; border: 1px solid #ccc; border-right-color: #fff; border-bottom-color: #fff; white-space: nowrap; line-height: 13px; }
.s112 { width: 112px; } .s78 { width: 78px; } .s152 { width: 152px; } .s53 { width: 53px; } .s30 { width: 31px; }

.dialog { position: absolute; top: 127px; left: 50%; margin-left: -277px; width: 554px; height: 460px; display: flex; flex-direction: column; background: #f0f0f0; border: 1px solid #7a7f88; box-shadow: 0 3px 9px rgba(0, 0, 0, .4); }
.dtitle { flex: none; height: 20px; display: flex; align-items: center; background: #fff; font: 8px/10px Roboto, "Open Sans", sans-serif; color: #222; }
.dtitle > svg { width: 11px; height: 11px; margin: 0 3px 0 4px; }
.dtitle button { width: 30px; display: grid; place-items: center; }
.dtitle button svg { width: 8px; height: 8px; fill: none; stroke: #222; }
.rtabs { flex: none; height: 16px; display: flex; align-items: center; gap: 5px; padding: 0 2px; background: linear-gradient(#e4e8ef, #b7c0d0); border-top: 1px solid #b8bfca; }
.rtab { align-self: flex-end; width: 82px; height: 14px; margin-left: -1px; background: #f3f6f9; border: 1px solid #a9b5c6; border-bottom: 0; border-radius: 2px 2px 0 0; }
.arr { width: 5px; height: 5px; }
.help { width: 11px; height: 11px; margin-left: 3px; }
.shark { width: 12px; height: 8px; }
.ribbon { flex: none; height: 62px; padding: 2px 2px; background: linear-gradient(#f3f6f9, #e0e6ed 50%, #cbd4de); border-bottom: 1px solid #b3c2cf; }
.group { width: 30px; height: 57px; display: flex; flex-direction: column; background: linear-gradient(#eceff3, #c3ccd8); }
.group button { flex: 1; display: flex; flex-direction: column; align-items: center; line-height: 10px; }
.group svg { width: 16px; height: 22px; margin: 2px 0 2px 3px; }
.group span { height: 10px; text-align: center; line-height: 9px; background: #b9c5d4; }

.dbody { flex: 1; display: flex; min-height: 0; }
.treepane { flex: none; width: 128px; display: flex; flex-direction: column; background: #fff; border-right: 3px solid #bfdce6; }
.treewrap { flex: 1; display: flex; min-height: 0; }
.tree { flex: 1; min-width: 0; list-style: none; display: flex; flex-direction: column; overflow: hidden; padding-top: 1px; }
.tree li { position: relative; flex: 1; min-height: 0; display: flex; align-items: center; white-space: nowrap; }
.tree li svg { width: 11px; height: 10px; margin-right: 2px; }
.rail { flex: none; align-self: stretch; width: 9px; border-right: 1px solid #ccc; }
.rail.sub { width: 13px; }
.end .rail.sub { border: 0; background: linear-gradient(#ccc, #ccc) right top / 1px 50% no-repeat; }
.branch { flex: none; width: 7px; height: 1px; background: #ccc; }
.child .branch { width: 6px; }
.minus { position: absolute; left: 5px; top: 2px; width: 7px; height: 7px; border: 1px solid #aaa; background: linear-gradient(#557, #557) center / 3px 1px no-repeat #fff; }
.vbar { flex: none; width: 10px; display: flex; flex-direction: column; align-items: center; background: #f0f0f0; }
.vbar svg, .hbar svg { width: 8px; height: 8px; margin: 2px 1px; fill: none; stroke: #444; stroke-width: 1.300; }
.space { flex: 54; } .thumb { flex: 184; width: 10px; background: #cdcdcd; } .space2 { flex: 68; }
.hbar { flex: none; height: 12px; display: flex; align-items: center; background: #f0f0f0; border-bottom: 1px solid #bbb; }
.hbar i { width: 81px; height: 10px; background: #cdcdcd; margin: 0 10px 0 2px; }

.content { flex: 1; min-width: 0; display: flex; flex-direction: column; padding: 3px 8px 4px 13px; }
h2 { font: bold 9px/12px "DejaVu Sans Condensed", "DejaVu Sans", sans-serif; color: #111; }
.tabs { display: flex; align-items: flex-end; height: 15px; }
.tabs button { height: 12px; min-width: 28px; padding: 0 4px; border: 1px solid #ddd; border-bottom: 0; border-left: 0; background: #f2f2f2; }
.tabs .sel { height: 15px; background: #fff; }
.page { flex: 1; display: flex; flex-direction: column; background: #fff; border: 1px solid #e2e2e2; padding: 4px 3px 5px; }
h3 { font: bold 7px/10px "Liberation Sans", Arial, sans-serif; color: #111; padding: 1px 0 0 1px; }
.row { display: flex; align-items: center; padding-left: 3px; }
.row label { width: 100px; white-space: nowrap; }
.r12 { height: 12px; } .r16 { height: 16px; } .r14 { height: 14px; } .r18 { height: 18px; }
.far { margin-top: 23px; }
.txt { flex: 1; height: 14px; padding: 0 1px; border: 1px solid #888; }
input[type="checkbox"] { appearance: none; width: 9px; height: 9px; border: 1px solid #444; background: #fff; }
input[type="checkbox"]:checked::after { content: ""; display: block; width: 5px; height: 3px; margin: 1px; border: solid #222; border-width: 0 0 1px 1px; transform: rotate(-45deg); }
input[type="checkbox"]:disabled { border-color: #ccc; }
input[type="checkbox"]:disabled::after { border-color: #aaa; }
.note { margin-left: 7px; }
.spins { margin-top: 19px; }
.spin { flex: 1; display: flex; height: 14px; border: 1px solid #bbb; }
.spin input { flex: 1; text-align: right; padding-right: 2px; }
.spin > span { width: 10px; display: flex; flex-direction: column; background: #eee; }
.spin button { flex: 1; display: grid; place-items: center; border: 1px solid #ccc; }
.spin i { border: 2px solid transparent; }
.spin .u { border-top: 0; border-bottom: 3px solid #111; }
.spin .d { border-bottom: 0; border-top: 3px solid #111; }
.row .l2 { width: 88px; margin-left: 14px; }
.btns { margin-top: auto; display: flex; gap: 5px; }
.btns button, .save { position: relative; width: 79px; height: 24px; background: #e1e1e1; border: 1px solid #bcbcbc; line-height: 8px; }
.btns .hot { background: #e3f1fb; border-color: #4a90c0; }
.cursor { position: absolute; left: 44px; top: 4px; width: 9px; height: 14px; }
.save { align-self: flex-end; width: 66px; height: 20px; margin: 6px 2px 0 0; flex: none; }
.dstatus { flex: none; height: 17px; display: flex; background: linear-gradient(#eef1f5, #c3cbd8); border-top: 1px solid #a9b3c2; font: 8px/15px Roboto, "Open Sans", sans-serif; }
.dstatus span { padding: 0 2px; border-right: 1px solid #9aa6b8; white-space: nowrap; }
.grip { width: 12px; background: radial-gradient(#8a96aa 1px, transparent 1px) 0 0 / 3px 3px; }
</style>
